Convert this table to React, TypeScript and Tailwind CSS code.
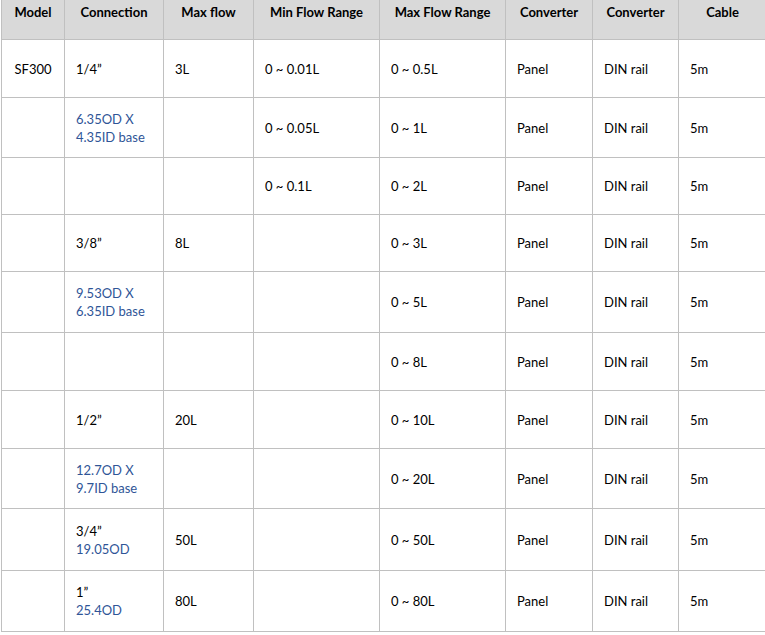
import React from "react";

type Conn = { main?: string; blue?: string[] };
type Row = {
  h: number;
  model?: string;
  conn: Conn;
  max?: string;
  min?: string;
  range: string;
};

const rows: Row[] = [
  { h: 58, model: "SF300", conn: { main: "1/4”" }, max: "3L", min: "0 ~ 0.01L", range: "0 ~ 0.5L" },
  { h: 60, conn: { blue: ["6.35OD X", "4.35ID base"] }, min: "0 ~ 0.05L", range: "0 ~ 1L" },
  { h: 57, conn: {}, min: "0 ~ 0.1L", range: "0 ~ 2L" },
  { h: 57, conn: { main: "3/8”" }, max: "8L", range: "0 ~ 3L" },
  { h: 61, conn: { blue: ["9.53OD X", "6.35ID base"] }, range: "0 ~ 5L" },
  { h: 58, conn: {}, range: "0 ~ 8L" },
  { h: 58, conn: { main: "1/2”" }, max: "20L", range: "0 ~ 10L" },
  { h: 60, conn: { blue: ["12.7OD X", "9.7ID base"] }, range: "0 ~ 20L" },
  { h: 62, conn: { main: "3/4”", blue: ["19.05OD"] }, max: "50L", range: "0 ~ 50L" },
  { h: 61, conn: { main: "1”", blue: ["25.4OD"] }, max: "80L", range: "0 ~ 80L" },
];

const headers = [
  { zh: "型号", en: "Model" },
  { zh: "接口尺寸", en: "Connection" },
  { zh: "最大流量", en: "Max flow" },
  { zh: "最小流量范围", en: "Min Flow Range" },
  { zh: "最大流量范围", en: "Max Flow Range" },
  { zh: "面板式", en: "Converter" },
  { zh: "导轨式", en: "Converter" },
  { zh: "线缆长", en: "Cable" },
];

const widths = [63, 99, 90, 126, 126, 87, 86, 88];

const cell = "border border-[#c0c0c0] align-middle pl-[11px] pr-1 text-left";

export default function App() {
  return (
    <div
      className="w-[765px] h-[635px] overflow-hidden bg-white text-black text-[13px] leading-[18px]"
      style={{ fontFamily: "Lato, 'Noto Sans CJK SC', sans-serif" }}
    >
      <table className="table-fixed border-collapse ml-px mt-[-14px] w-[765px]">
        <colgroup>
          {widths.map((w, i) => (
            <col key={i} style={{ width: w }} />
          ))}
        </colgroup>
        <thead>
          <tr>
            {headers.map((hd, i) => (
              <th
                key={i}
                className="border border-[#c0c0c0] bg-[#d9d9d9] align-bottom text-center font-bold pb-[18px] px-1 whitespace-nowrap"
              >
                <div className="leading-[16px] text-[13px] -translate-y-[3px]">{hd.zh}</div>
                <div className="leading-[18px]">{hd.en}</div>
              </th>
            ))}
          </tr>
        </thead>
        <tbody>
          {rows.map((r, i) => (
            <tr key={i} style={{ height: r.h }}>
              <td className="border border-[#c0c0c0] align-middle text-center">{r.model ?? ""}</td>
              <td className={cell}>
                {r.conn.main && <div>{r.conn.main}</div>}
                {r.conn.blue?.map((b, j) => (
                  <div key={j} className="text-[#2f5597]">
                    {b}
                  </div>
                ))}
              </td>
              <td className={cell}>{r.max ?? ""}</td>
              <td className={cell}>{r.min ?? ""}</td>
              <td className={cell}>{r.range}</td>
              <td className={cell}>Panel</td>
              <td className={cell}>DIN rail</td>
              <td className={cell}>5m</td>
            </tr>
          ))}
        </tbody>
      </table>
    </div>
  );
}
